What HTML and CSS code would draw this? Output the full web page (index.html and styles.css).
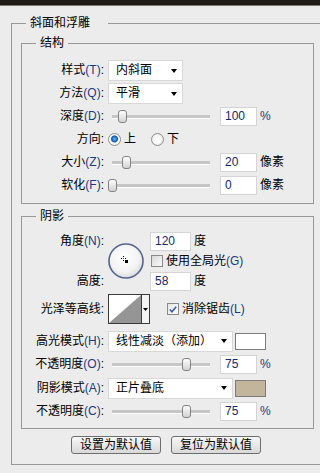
FILE: index.html
```html
<!DOCTYPE html>
<html lang="zh-CN">

<head>
    <meta charset="UTF-8">
    <title>斜面和浮雕</title>
    <link rel="stylesheet" href="styles.css">
</head>

<body>
    <div class="titlebar"></div>

    <fieldset class="group outer">
        <legend>斜面和浮雕</legend>

        <fieldset class="group inner">
            <legend>结构</legend>

            <div class="row">
                <span class="lbl">样式<span class="key">(T)</span>:</span>
                <div class="select narrow"><span>内斜面</span><i class="arrow"></i></div>
            </div>
            <div class="row">
                <span class="lbl">方法<span class="key">(Q)</span>:</span>
                <div class="select narrow"><span>平滑</span><i class="arrow"></i></div>
            </div>
            <div class="row">
                <span class="lbl">深度<span class="key">(D)</span>:</span>
                <div class="slider"><i class="thumb" style="left: 10px"></i></div>
                <div class="num">100</div>
                <span class="unit key">%</span>
            </div>
            <div class="row">
                <span class="lbl">方向:</span>
                <div class="radios">
                    <i class="radio on"></i><span>上</span>
                    <i class="radio second"></i><span>下</span>
                </div>
            </div>
            <div class="row">
                <span class="lbl">大小<span class="key">(Z)</span>:</span>
                <div class="slider"><i class="thumb" style="left: 14px"></i></div>
                <div class="num">20</div>
                <span class="unit">像素</span>
            </div>
            <div class="row">
                <span class="lbl">软化<span class="key">(F)</span>:</span>
                <div class="slider"><i class="thumb" style="left: 0px"></i></div>
                <div class="num">0</div>
                <span class="unit">像素</span>
            </div>
        </fieldset>

        <fieldset class="group inner shadow">
            <legend>阴影</legend>

            <div class="angle">
                <span class="lbl">角度<span class="key">(N)</span>:</span>
                <svg class="dial" width="36" height="36" viewBox="0 0 36 36">
                    <defs>
                        <radialGradient id="dialFill" cx="45%" cy="40%" r="60%">
                            <stop offset="0" stop-color="#ffffff"/>
                            <stop offset="0.7" stop-color="#f3f3f3"/>
                            <stop offset="1" stop-color="#d9dbe0"/>
                        </radialGradient>
                    </defs>
                    <circle cx="18" cy="18" r="17" fill="url(#dialFill)" stroke="#56658f" stroke-width="1.6"/>
                    <rect x="15" y="13" width="1" height="1" fill="#000"/>
                    <rect x="15" y="17" width="1" height="1" fill="#000"/>
                    <rect x="13" y="15" width="1" height="1" fill="#000"/>
                    <rect x="17" y="15" width="1" height="1" fill="#000"/>
                    <rect x="15" y="15" width="1" height="1" fill="#555"/>
                    <rect x="17" y="17" width="3" height="3" fill="#000"/>
                </svg>
                <div class="field"><div class="num wide">120</div><span>度</span></div>

                <div class="field global">
                    <i class="check"></i><span>使用全局光<span class="key">(G)</span></span>
                </div>

                <span class="lbl alt">高度:</span>
                <div class="field alt-field"><div class="num wide">58</div><span>度</span></div>
            </div>

            <div class="contour-row">
                <span class="lbl">光泽等高线:</span>
                <svg class="contour" width="42" height="30" viewBox="0 0 42 30">
                    <rect x="0.5" y="0.5" width="41" height="29" fill="#f4f4f4" stroke="#3a3a3a"/>
                    <rect x="1" y="1" width="32" height="28" fill="#ffffff"/>
                    <polygon points="1,29 33,1 33,29" fill="#959595"/>
                    <line x1="33.5" y1="1" x2="33.5" y2="29" stroke="#3a3a3a"/>
                    <polygon points="35,14 40,14 37.5,17" fill="#000"/>
                </svg>
                <div class="field antialias">
                    <i class="check on">
                        <svg width="11" height="11" viewBox="0 0 11 11">
                            <path d="M2 5.5 L4.3 8 L9 2.5" fill="none" stroke="#3a5ea8" stroke-width="1.8"/>
                        </svg>
                    </i>
                    <span>消除锯齿<span class="key">(L)</span></span>
                </div>
            </div>

            <div class="modes">
                <div class="row tall">
                    <span class="lbl">高光模式<span class="key">(H)</span>:</span>
                    <div class="mode">
                        <div class="select broad"><span>线性减淡（添加）</span><i class="arrow"></i></div>
                        <i class="swatch"></i>
                    </div>
                </div>
                <div class="row">
                    <span class="lbl">不透明度<span class="key">(O)</span>:</span>
                    <div class="slider"><i class="thumb" style="left: 74px"></i></div>
                    <div class="num">75</div>
                    <span class="unit key">%</span>
                </div>
                <div class="row tall">
                    <span class="lbl">阴影模式<span class="key">(A)</span>:</span>
                    <div class="mode">
                        <div class="select broad"><span>正片叠底</span><i class="arrow"></i></div>
                        <i class="swatch tan"></i>
                    </div>
                </div>
                <div class="row">
                    <span class="lbl">不透明度<span class="key">(C)</span>:</span>
                    <div class="slider"><i class="thumb" style="left: 74px"></i></div>
                    <div class="num">75</div>
                    <span class="unit key">%</span>
                </div>
            </div>
        </fieldset>

        <div class="buttons">
            <button class="btn">设置为默认值</button>
            <button class="btn">复位为默认值</button>
        </div>
    </fieldset>
</body>

</html>
```

FILE: styles.css
```css
* {
    box-sizing: border-box;
}

body {
    margin: 0;
    width: 320px;
    height: 473px;
    overflow: hidden;
    background: #ececec;
    font-family: "Liberation Sans", "Noto Sans CJK SC", sans-serif;
    font-size: 12px;
    line-height: 15px;
    color: #000;
}

.titlebar {
    height: 6px;
    background: #1e1a15;
    border-bottom: 1px solid #7d7870;
}

.group {
    margin: 0;
    min-width: 0;
    border: 1px solid #989898;
}

.group > legend {
    padding: 0 4px;
    line-height: 15px;
}

/* the right edge of the outer group is cut off by the window */
.outer {
    width: 309px;
    margin: 10px 0 0 11px;
    padding: 5px 0 10px 9px;
    border-right: none;
}

.outer > legend {
    margin-left: 5px;
    padding-right: 18px;
}

.inner {
    width: 293px;
    padding: 8px 0 6px 0;
}

.inner > legend {
    margin-left: 14px;
}

.shadow {
    margin-top: 5px;
    padding: 7px 0 5px 0;
}

.key {
    color: #1b3a80;
}

.lbl {
    text-align: right;
    white-space: nowrap;
}

/* rows */
.row {
    display: grid;
    grid-template-columns: 82px 108px 37px auto;
    column-gap: 4px;
    align-items: center;
    height: 23px;
}

.row.tall {
    height: 24px;
}

.unit {
    margin-left: -1px;
}

.select {
    display: flex;
    align-items: center;
    justify-content: space-between;
    height: 21px;
    padding: 0 5px 0 7px;
    background: #fff;
    border: 1px solid #d8d8d8;
    white-space: nowrap;
}

.select.narrow {
    width: 75px;
}

.select.broad {
    width: 125px;
}

.arrow {
    width: 0;
    height: 0;
    border-left: 3.5px solid transparent;
    border-right: 3.5px solid transparent;
    border-top: 4px solid #000;
}

.slider {
    position: relative;
    height: 13px;
}

.slider::before {
    content: "";
    position: absolute;
    left: 4px;
    right: 6px;
    top: 5px;
    height: 3px;
    background: #c6c6c6;
    border-bottom: 1px solid #fff;
}

.thumb {
    position: absolute;
    top: 0;
    width: 9px;
    height: 13px;
    border: 1px solid #838383;
    border-radius: 3px;
    background: linear-gradient(#fefefe, #d2d2d2);
}

.num {
    height: 19px;
    padding-left: 4px;
    line-height: 17px;
    background: #fff;
    border: 1px solid #d4d4d4;
    color: #14296c;
}

.num.wide {
    width: 41px;
}

.radios {
    display: flex;
    align-items: center;
}

.radio {
    width: 13px;
    height: 13px;
    margin-right: 3px;
    border-radius: 50%;
    border: 1px solid #8e8e8e;
    background: radial-gradient(circle, #fdfdfd 40%, #d8d8d8);
}

.radio.on {
    background: radial-gradient(circle at 50% 45%, #6cc0f4 0, #1a62b6 32%, #1a62b6 38%, #eef2f6 48%, #fff 65%, #d6d6d6);
}

.radio.second {
    margin-left: 15px;
}

/* angle block */
.angle {
    display: grid;
    grid-template-columns: 82px 38px auto;
    grid-template-rows: repeat(3, 20px);
    column-gap: 4px;
    align-items: center;
}

.dial {
    grid-column: 2;
    grid-row: 1 / 4;
    align-self: center;
}

.field {
    display: flex;
    align-items: center;
    gap: 3px;
}

.global {
    grid-column: 3;
    grid-row: 2;
    padding-left: 1px;
}

.alt {
    grid-column: 1;
    grid-row: 3;
}

.alt-field {
    grid-column: 3;
    grid-row: 3;
}

.check {
    display: flex;
    align-items: center;
    justify-content: center;
    width: 12px;
    height: 12px;
    border: 1px solid #8a8a8a;
    background: linear-gradient(135deg, #d8d8d8, #fbfbfb);
}

.check.on {
    background: linear-gradient(135deg, #e6e6e6, #fdfdfd);
}

/* contour */
.contour-row {
    display: grid;
    grid-template-columns: 82px 42px auto;
    column-gap: 4px;
    align-items: center;
    height: 30px;
    margin-top: 3px;
}

.antialias {
    margin-left: 13px;
}

.modes {
    margin-top: 5px;
}

.mode {
    grid-column: 2 / 5;
    display: flex;
    align-items: center;
    gap: 2px;
}

.swatch {
    width: 31px;
    height: 17px;
    background: #fff;
    border: 1px solid #7b7b7b;
}

.swatch.tan {
    background: #c2b59b;
}

/* buttons */
.buttons {
    display: flex;
    gap: 10px;
    margin: 7px 0 0 50px;
}

.btn {
    width: 90px;
    height: 18px;
    padding: 0;
    font: inherit;
    line-height: 16px;
    color: #000;
    border: 1px solid #6e6e6e;
    border-radius: 3px;
    background: linear-gradient(#f7f7f7, #d9d9d9);
}
```
